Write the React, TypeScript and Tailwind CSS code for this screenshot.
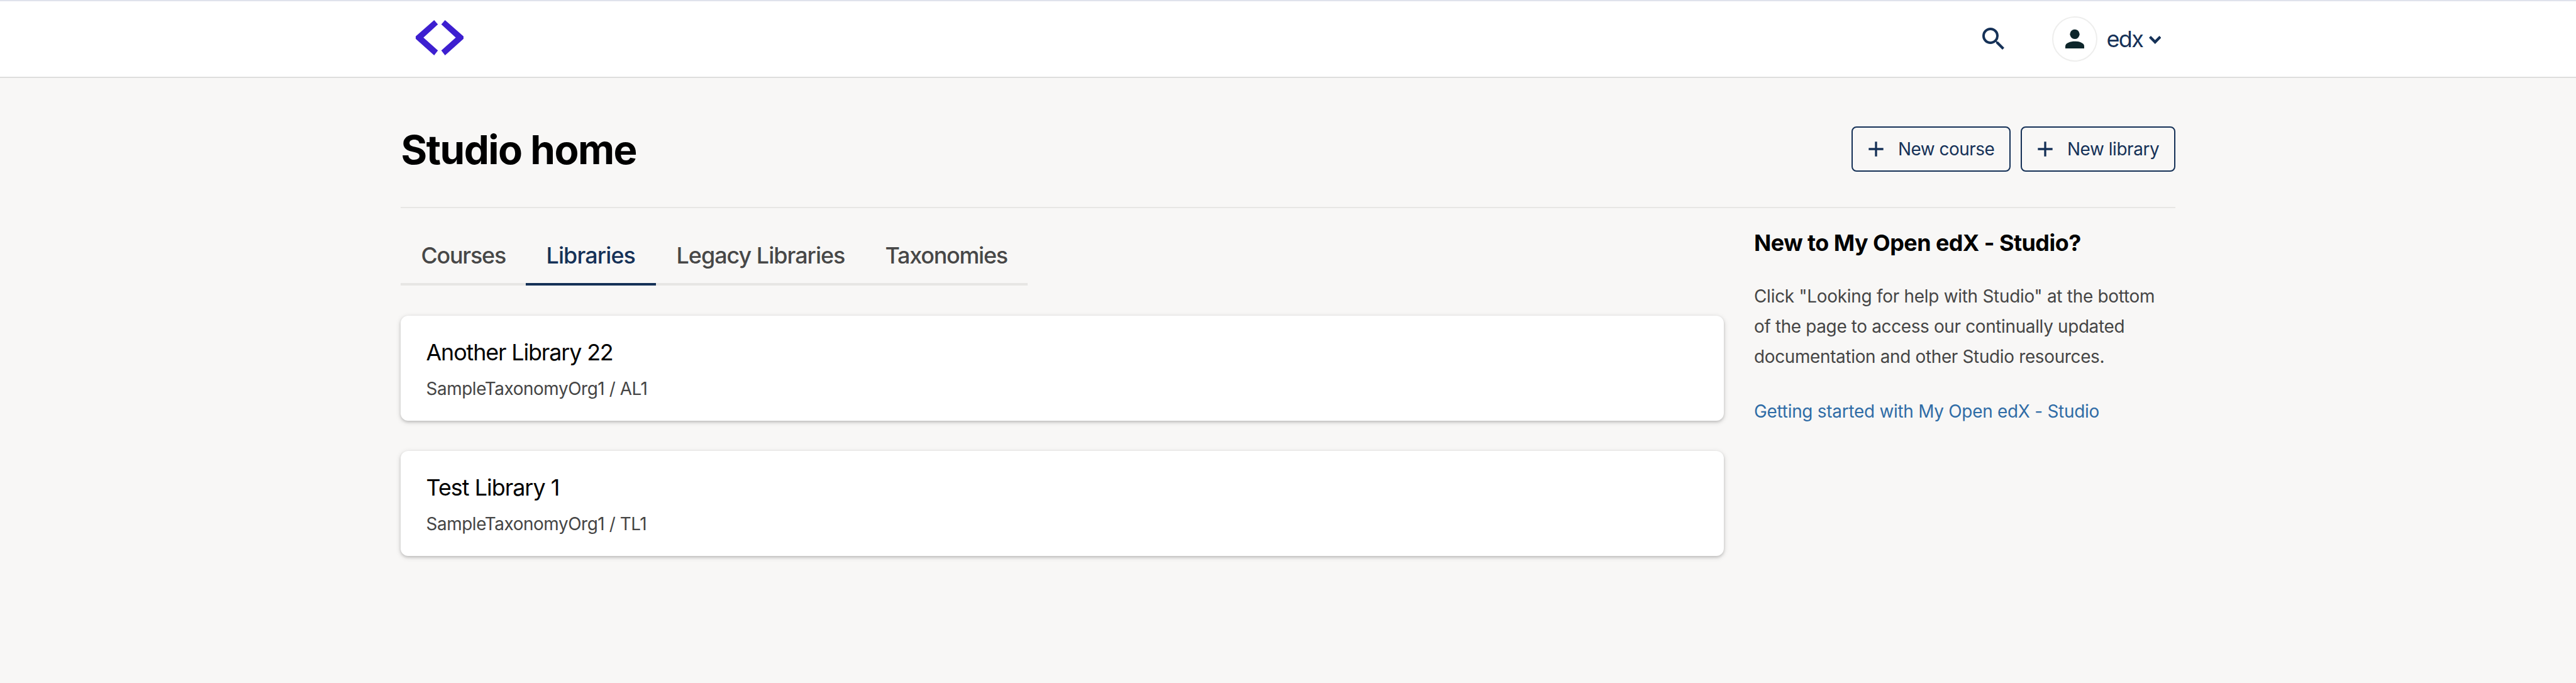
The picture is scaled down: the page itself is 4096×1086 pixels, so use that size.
import type { ReactNode } from "react";

function Logo() {
  return (
    <svg className="h-[56px] w-[76px]" viewBox="0 0 228 168" fill="#3d1fd0">
      <path d="M88 0 106 20 37 83 106 145 88 168 0 89V77Z" />
      <path d="M140 0 122 20 191 83 122 145 140 168 228 89V77Z" />
    </svg>
  );
}

function SearchIcon() {
  return (
    <svg className="size-[48px]" viewBox="0 0 24 24" fill="currentColor">
      <path d="M15.5 14h-.79l-.28-.27A6.471 6.471 0 0 0 16 9.5 6.5 6.5 0 1 0 9.5 16c1.61 0 3.09-.59 4.23-1.57l.27.28v.79l5 4.99L20.49 19l-4.99-5zm-6 0C7.01 14 5 11.99 5 9.5S7.01 5 9.5 5 14 7.01 14 9.5 11.99 14 9.5 14z" />
    </svg>
  );
}

function Avatar() {
  return (
    <span className="block size-[72px] rounded-full border-2 border-[#eeeeed]">
      <svg className="size-full" viewBox="6 6 204 204" fill="#0d262b">
        <circle cx="108" cy="85" r="23" />
        <path d="M63 153v-11c0-15 25-23 45-23s45 8 45 23v11z" />
      </svg>
    </span>
  );
}

function OutlineButton({ width, children }: { width: string; children: ReactNode }) {
  return (
    <button
      className={`flex h-[72px] items-center rounded-[8px] border-2 border-[#153157] pl-[17px] text-[27.9px] whitespace-nowrap text-[#153157] ${width}`}
    >
      <svg className="mr-[15px] size-[40px] shrink-0" viewBox="0 0 24 24" fill="currentColor">
        <path d="M19 13h-6v6h-2v-6H5v-2h6V5h2v6h6z" />
      </svg>
      {children}
    </button>
  );
}

function Tab({ className, active, children }: { className: string; active?: boolean; children: ReactNode }) {
  return (
    <a
      className={`block border-b-4 pb-5 pl-[32.5px] text-[35.86px] leading-[48px] font-medium whitespace-nowrap ${
        active ? "border-[#153157] text-[#153157]" : "border-[#e7e6e4] text-[#474747]"
      } ${className}`}
    >
      {children}
    </a>
  );
}

function LibraryCard({ title, slug, className, titleClass }: { title: string; slug: string; className: string; titleClass: string }) {
  return (
    <article
      className={`mt-12 rounded-[12px] bg-white px-[40.5px] pt-9 whitespace-nowrap shadow-[0_2px_4px_rgba(0,0,0,0.15),0_2px_8px_rgba(0,0,0,0.15)] ${className}`}
    >
      <h3 className={`text-[35.86px] leading-[44px] text-black ${titleClass}`}>{title}</h3>
      <p className="mt-4 text-[27.9px] leading-[40px] tracking-[-0.0155em] text-[#454545]">{slug}</p>
    </article>
  );
}

export default function App() {
  return (
    <div className="min-h-[1086px] bg-[#f8f7f6] font-['Inter',sans-serif]">
      <header className="h-[124px] border-t-2 border-b-2 border-t-[#dfe2ec] border-b-[#dededd] bg-white">
        <div className="mx-auto flex h-full w-[2822px] items-center justify-between pr-[23px] pl-6 text-[#153157]">
          <div className="pb-[5px]">
            <Logo />
          </div>
          <div className="flex items-center">
            <SearchIcon />
            <div className="ml-[69px] flex items-center">
              <Avatar />
              <span className="ml-[15px] w-[67px] text-[36px] leading-[48px] tracking-[-0.045em]">edx</span>
              <svg className="mt-[3px] h-[13px] w-[19.5px]" viewBox="0 0 59 39" fill="currentColor">
                <path d="M0 9 9 0 29.500 20.500 50 0 59 9 29.500 39Z" />
              </svg>
            </div>
          </div>
        </div>
      </header>

      <main className="mx-auto w-[2822px]">
        <div className="flex justify-between border-b-2 border-[#e7e6e4] pt-[77px] pb-[56px]">
          <h1 className="pt-px pl-[0.5px] text-[63.75px] leading-[71px] font-bold tracking-[-0.024em] text-black">Studio home</h1>
          <div className="flex gap-4">
            <OutlineButton width="w-[253px]">
              <span className="pt-px tracking-[-0.0175em]">New course</span>
            </OutlineButton>
            <OutlineButton width="w-[246px]">
              <span className="pt-px tracking-[-0.015em]">New library</span>
            </OutlineButton>
          </div>
        </div>

        <div className="flex gap-12">
          <section className="w-[2104px]">
            <nav className="mt-[51px] flex w-[997px]">
              <Tab className="w-[199px] tracking-[-0.034em]">Courses</Tab>
              <Tab active className="w-[207px] tracking-[-0.024em]">Libraries</Tab>
              <Tab className="w-[332px] tracking-[-0.027em]">Legacy Libraries</Tab>
              <Tab className="flex-1 tracking-[-0.034em]">Taxonomies</Tab>
            </nav>
            <LibraryCard
              title="Another Library 22"
              slug="SampleTaxonomyOrg1 / AL1"
              className="h-[167px]"
              titleClass="tracking-[-0.0315em]"
            />
            <LibraryCard
              title="Test Library 1"
              slug="SampleTaxonomyOrg1 / TL1"
              className="h-[167px]"
              titleClass="tracking-[-0.027em]"
            />
          </section>

          <aside className="w-[670px] pt-[31px] text-[27.9px] leading-[47.8px] whitespace-nowrap">
            <h2 className="text-[35.86px] leading-[48px] font-bold tracking-[-0.0145em] text-black">
              New to My Open edX - Studio?
            </h2>
            <p className="mt-[38px] text-[#454545]">
              <span className="block tracking-[-0.009em]">Click "Looking for help with Studio" at the bottom</span>
              <span className="block tracking-[-0.012em]">of the page to access our continually updated</span>
              <span className="block tracking-[-0.0115em]">documentation and other Studio resources.</span>
            </p>
            <a className="mt-[40px] block tracking-[-0.009em] text-[#2f6ca6]">Getting started with My Open edX - Studio</a>
          </aside>
        </div>
      </main>
    </div>
  );
}
